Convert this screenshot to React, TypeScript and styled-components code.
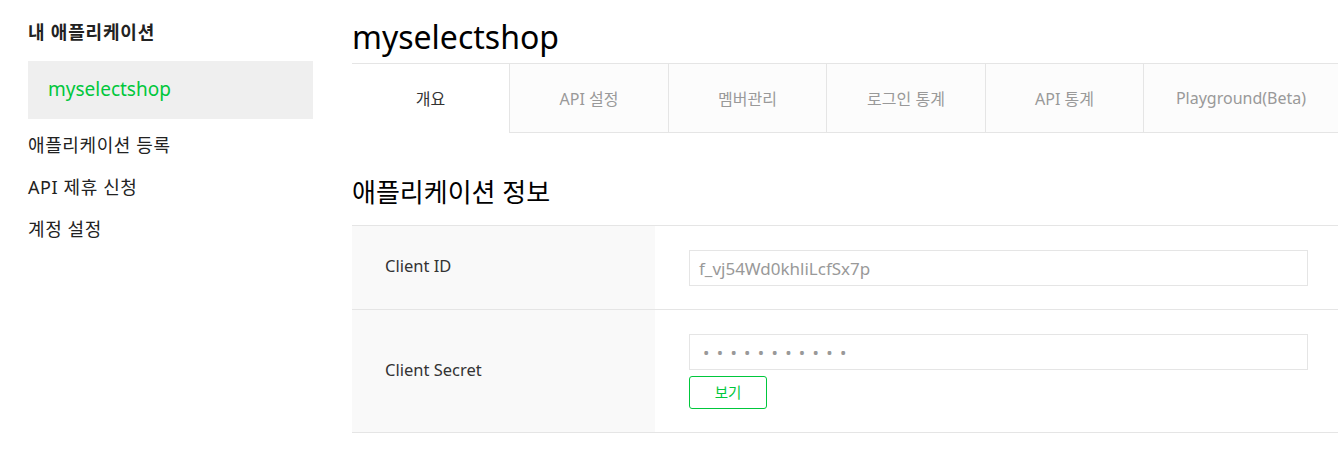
import React from "react";
import styled, { createGlobalStyle } from "styled-components";

const Global = createGlobalStyle`
  html, body { margin: 0; padding: 0; background: #fff; }
  body {
    font-family: "Noto Sans", "Noto Sans CJK KR", sans-serif;
    color: #222;
    -webkit-font-smoothing: antialiased;
  }
  * { box-sizing: border-box; }
`;

const Page = styled.div`
  display: flex;
  width: 1338px;
  height: 450px;
  overflow: hidden;
`;

const Sidebar = styled.aside`
  flex: 0 0 313px;
  padding: 18px 0 0 28px;
`;

const SideTitle = styled.h2`
  margin: 0;
  font-size: 18px;
  font-weight: 700;
  line-height: 29px;
  color: #222;
  letter-spacing: 0.8px;
`;

const AppBox = styled.div`
  margin-top: 14px;
  height: 58px;
  background: #efefef;
  display: flex;
  align-items: center;
  padding-left: 20px;
  padding-bottom: 2px;
  font-size: 19px;
  color: #00c73c;
`;

const MenuList = styled.ul`
  list-style: none;
  margin: 12px 0 0;
  padding: 0;
  display: flex;
  flex-direction: column;
  gap: 14px;
`;

const MenuItem = styled.li`
  font-size: 18px;
  line-height: 28px;
  color: #222;
  letter-spacing: 0.6px;
`;

const Main = styled.main`
  flex: 1;
  margin-left: 39px;
  min-width: 0;
`;

const Title = styled.h1`
  margin: 0;
  padding-top: 16px;
  height: 63px;
  font-size: 32px;
  font-weight: 400;
  line-height: 42px;
  color: #000;
`;

const Tabs = styled.nav`
  display: flex;
  height: 70px;
  border-top: 1px solid #e5e5e5;
`;

const Tab = styled.div<{ $active?: boolean; $w?: number }>`
  flex: ${(p) => (p.$w ? `0 0 ${p.$w}px` : "1")};
  display: flex;
  align-items: center;
  justify-content: center;
  font-size: 16px;
  color: ${(p) => (p.$active ? "#333" : "#999")};
  background: ${(p) => (p.$active ? "#fff" : "#fcfcfc")};
  border-left: ${(p) => (p.$active ? "none" : "1px solid #e5e5e5")};
  border-bottom: ${(p) => (p.$active ? "1px solid transparent" : "1px solid #e5e5e5")};
`;

const SectionTitle = styled.h3`
  margin: 0;
  padding-top: 41px;
  height: 92px;
  font-size: 26px;
  font-weight: 400;
  line-height: 36px;
  color: #000;
`;

const Table = styled.div`
  border-top: 1px solid #e5e5e5;
`;

const Row = styled.div`
  display: flex;
  border-bottom: 1px solid #e5e5e5;
`;

const Label = styled.div`
  flex: 0 0 303px;
  background: #f9f9f9;
  display: flex;
  align-items: center;
  padding-left: 33px;
  padding-bottom: 4px;
  font-size: 16.5px;
  color: #333;
`;

const Value = styled.div`
  flex: 1;
  padding: 24px 30px 23px 34px;
  display: flex;
  flex-direction: column;
  align-items: flex-start;
  gap: 6px;
`;

const Field = styled.div<{ $dots?: boolean }>`
  width: 619px;
  height: 36px;
  border: 1px solid #e5e5e5;
  display: flex;
  align-items: center;
  padding-left: ${(p) => (p.$dots ? "13px" : "9px")};
  font-size: 17px;
  color: #999;
  letter-spacing: ${(p) => (p.$dots ? "7.3px" : "0")};
`;

const ViewButton = styled.button`
  width: 78px;
  height: 33px;
  border: 1px solid #00c73c;
  border-radius: 3px;
  background: #fff;
  color: #00c73c;
  font-family: inherit;
  font-size: 14.5px;
  padding: 0 0 2px;
`;

export default function App() {
  const tabs = [
    { label: "개요", w: 157, active: true },
    { label: "API 설정", w: 159 },
    { label: "멤버관리", w: 158 },
    { label: "로그인 통계", w: 159 },
    { label: "API 통계", w: 158 },
    { label: "Playground(Beta)" },
  ];
  return (
    <>
      <Global />
      <Page>
        <Sidebar>
          <SideTitle>내 애플리케이션</SideTitle>
          <AppBox>myselectshop</AppBox>
          <MenuList>
            <MenuItem>애플리케이션 등록</MenuItem>
            <MenuItem>API 제휴 신청</MenuItem>
            <MenuItem>계정 설정</MenuItem>
          </MenuList>
        </Sidebar>
        <Main>
          <Title>myselectshop</Title>
          <Tabs>
            {tabs.map((t) => (
              <Tab key={t.label} $active={t.active} $w={t.w}>
                {t.label}
              </Tab>
            ))}
          </Tabs>
          <SectionTitle>애플리케이션 정보</SectionTitle>
          <Table>
            <Row>
              <Label>Client ID</Label>
              <Value>
                <Field>f_vj54Wd0khliLcfSx7p</Field>
              </Value>
            </Row>
            <Row>
              <Label>Client Secret</Label>
              <Value>
                <Field $dots>{"•••••••••••"}</Field>
                <ViewButton>보기</ViewButton>
              </Value>
            </Row>
          </Table>
        </Main>
      </Page>
    </>
  );
}
